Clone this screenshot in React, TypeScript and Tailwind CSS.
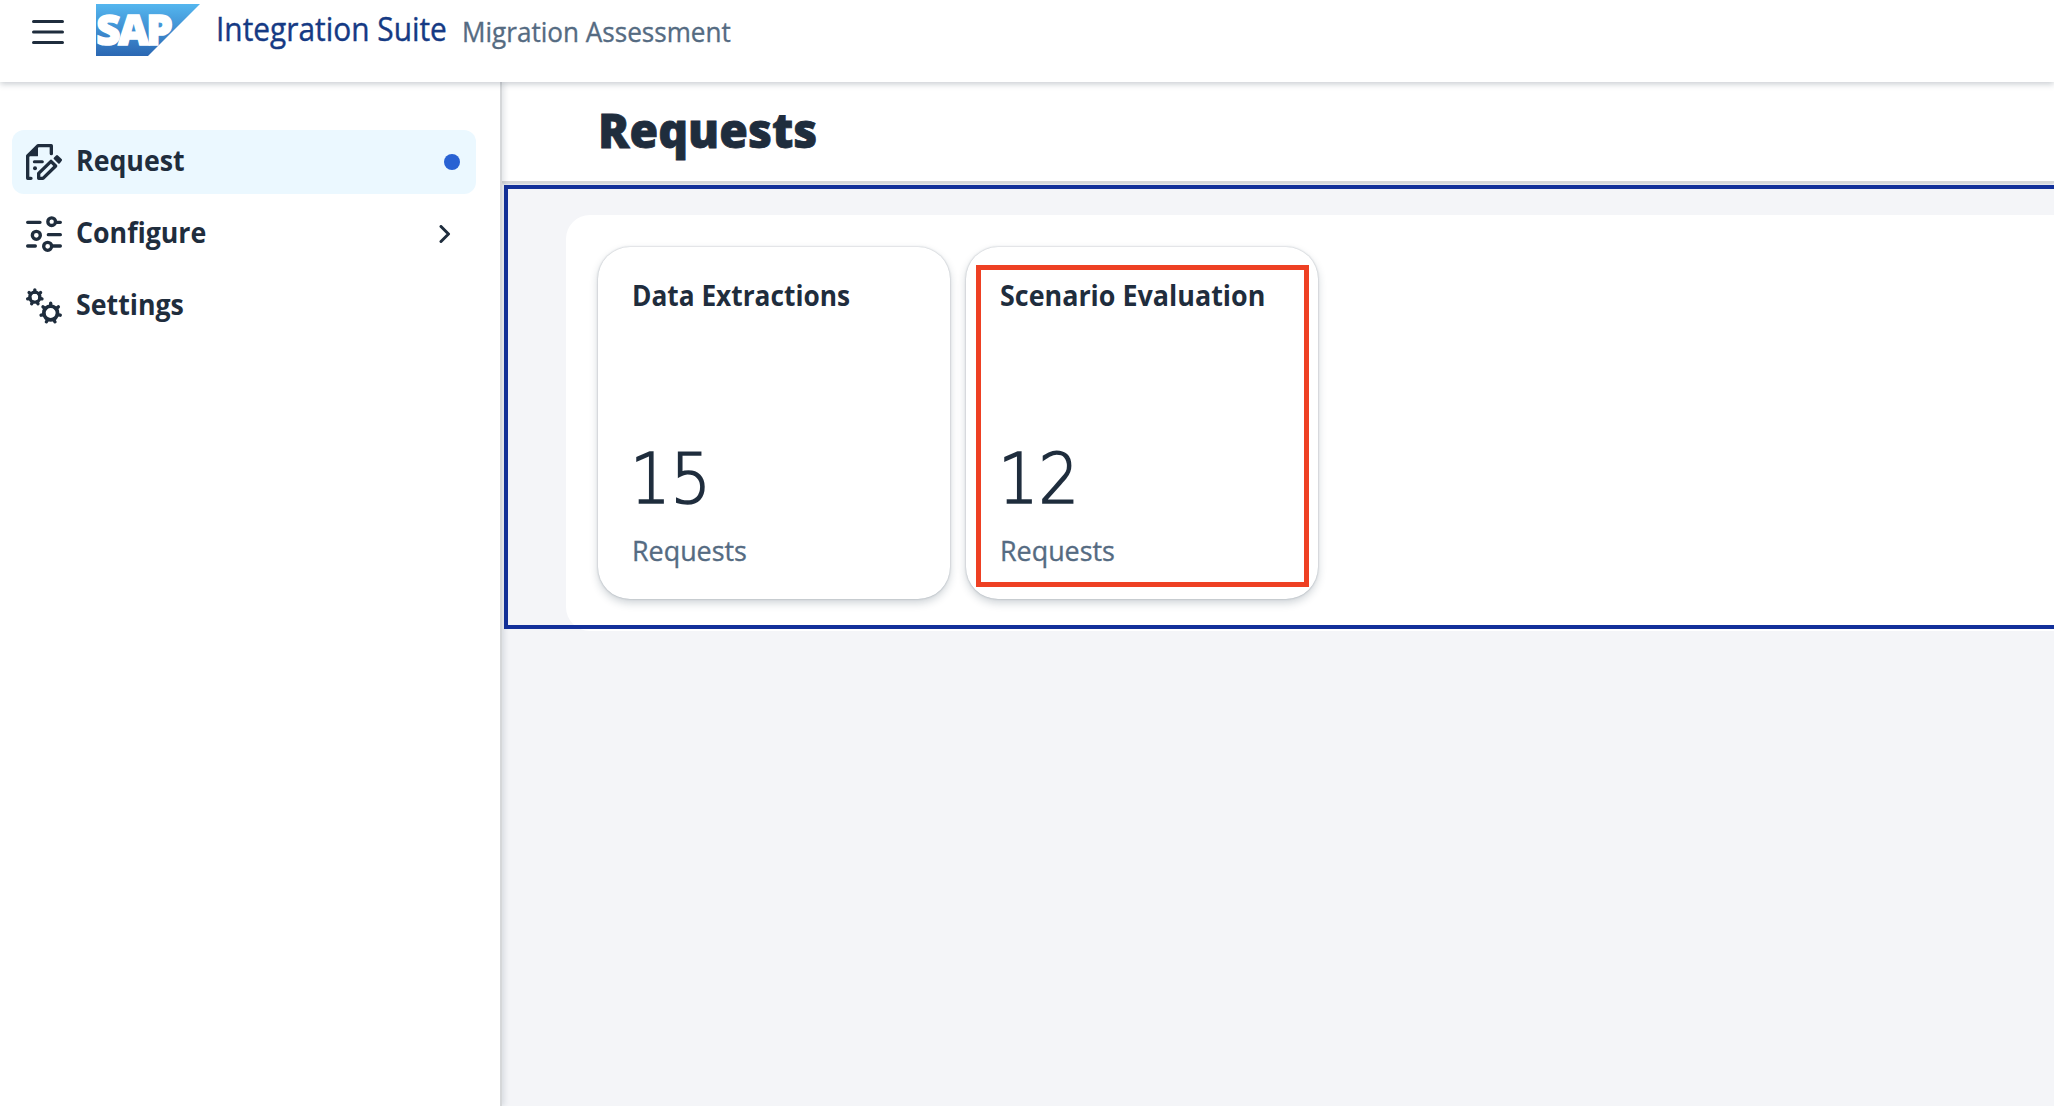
import type { ReactNode } from "react";

const INK = "#1f2d3d";

function MenuIcon() {
  return (
    <svg width="32" height="24" viewBox="0 0 32 24" stroke={INK} strokeWidth="3" strokeLinecap="round">
      <path d="M1.5 1.5H30.5M1.5 12H30.5M1.5 22.5H30.5" />
    </svg>
  );
}

function SapLogo() {
  return (
    <svg width="104" height="52" viewBox="0 0 104 52" className="block overflow-visible">
      <defs>
        <linearGradient id="sap" x1="0" y1="0" x2="0" y2="1">
          <stop offset="0" stopColor="#54b6ef" />
          <stop offset="1" stopColor="#2b67b3" />
        </linearGradient>
      </defs>
      <path d="M0 0H104L52 52H0Z" fill="url(#sap)" />
      <text
        x="0.3"
        y="41.2"
        fill="#fff"
        stroke="#fff"
        strokeWidth="1.6"
        fontFamily="Open Sans, sans-serif"
        fontWeight="800"
        fontSize="42"
        letterSpacing="-2.4"
      >
        SAP
      </text>
    </svg>
  );
}

function RequestIcon() {
  return (
    <svg width="36" height="36" viewBox="78 72 108 108" fill="none" stroke={INK} strokeWidth="10" strokeLinecap="round" strokeLinejoin="round">
      <path d="M93 175H83V108L114 77H154V101" />
      <path d="M86 107L112 81V107Z" fill={INK} strokeWidth="4" />
      <path d="M103 125H127" strokeWidth="9" />
      <circle cx="105" cy="145" r="6" fill={INK} stroke="none" />
      <path d="M116 175V160L153 124L167 138L129 175Z" strokeWidth="10" />
      <path d="M171 109L182 120L177 127L165 115Z" fill={INK} strokeWidth="8" />
    </svg>
  );
}

function ConfigureIcon() {
  return (
    <svg width="36" height="36" viewBox="78 288 108 108" fill="none" stroke={INK} strokeWidth="10" strokeLinecap="round">
      <path d="M83 307H120M170 307H181M145 344H181M83 378H106M160 378H181" />
      <circle cx="155" cy="305" r="11.5" />
      <circle cx="109" cy="346" r="12" />
      <circle cx="143" cy="379" r="12" />
    </svg>
  );
}

function Gear({ cx, cy, r, tip, ring }: { cx: number; cy: number; r: number; tip: number; ring: number }) {
  return (
    <g>
      <circle cx={cx} cy={cy} r={r} strokeWidth={ring} />
      {[0, 1, 2, 3, 4, 5, 6].map((i) => {
        const a = (i * 2 * Math.PI) / 7 - Math.PI / 2;
        return (
          <line
            key={i}
            x1={cx + r * Math.cos(a)}
            y1={cy + r * Math.sin(a)}
            x2={cx + tip * Math.cos(a)}
            y2={cy + tip * Math.sin(a)}
            strokeWidth="10"
          />
        );
      })}
    </g>
  );
}

function SettingsIcon() {
  return (
    <svg width="36" height="36" viewBox="78 504 108 108" fill="none" stroke={INK} strokeLinecap="round">
      <Gear cx={104.5} cy={531.5} r={15} tip={22} ring={10} />
      <Gear cx={152} cy={579} r={20.5} tip={29.5} ring={11} />
    </svg>
  );
}

function ChevronIcon() {
  return (
    <svg width="12" height="18" viewBox="0 0 12 18" fill="none" stroke={INK} strokeWidth="3" strokeLinecap="round" strokeLinejoin="round" className="mr-[9px]">
      <path d="M2 1.5L9.5 9L2 16.5" />
    </svg>
  );
}

function NavItem({ icon, label, active, children }: { icon: ReactNode; label: string; active?: boolean; children?: ReactNode }) {
  return (
    <a className={`flex h-16 items-center rounded-xl pl-[14px] pr-4 ${active ? "bg-[#ebf8ff]" : ""}`}>
      {icon}
      <span className="mb-[4px] ml-[14px] origin-left scale-x-[0.955] whitespace-nowrap text-[28px] font-bold leading-[38px]">{label}</span>
      <span className="ml-auto flex">{children}</span>
    </a>
  );
}

function Tile({ title, titleScale, value, marked }: { title: string; titleScale: string; value: string; marked?: boolean }) {
  return (
    <article className="relative flex h-[352px] w-[352px] flex-col rounded-[32px] bg-white pl-[34px] pt-[29px] shadow-[0_0_2px_rgba(34,53,72,0.35),0_4px_8px_rgba(34,53,72,0.22)]">
      <h2 className={`origin-left whitespace-nowrap text-[28px] font-bold leading-[38px] ${titleScale}`}>{title}</h2>
      <div className="-ml-[2px] mt-[124px] h-[82px] origin-left scale-x-[0.91] whitespace-nowrap font-['DejaVu_Sans',sans-serif] text-[70px] font-extralight leading-[82px] [-webkit-text-stroke:1.7px_#1f2d3d]">{value}</div>
      <p className="mt-[11px] origin-left scale-x-[0.96] text-[28px] leading-[38px] text-[#556b82] [-webkit-text-stroke:0.35px_#556b82]">Requests</p>
      {marked && <div className="absolute left-[10px] top-[18px] h-[322px] w-[333px] border-[5px] border-[#ee4023]" />}
    </article>
  );
}

export default function App() {
  return (
    <div className="flex h-[1106px] w-full flex-col overflow-hidden bg-white font-['Open_Sans',sans-serif] text-[#1f2d3d]">
      <header className="relative z-10 flex h-[82px] shrink-0 items-start bg-white shadow-[0_2px_6px_rgba(34,53,72,0.25)]">
        <div className="ml-8 mt-5"><MenuIcon /></div>
        <div className="ml-8 mt-1"><SapLogo /></div>
        <span className="ml-4 mt-[7px] w-[246px] origin-left scale-x-[0.933] whitespace-nowrap text-[32px] leading-[44px] text-[#153a84] [-webkit-text-stroke:0.4px_#153a84]">Integration Suite</span>
        <span className="mt-[12px] origin-left scale-x-[0.932] whitespace-nowrap text-[28px] leading-[38px] text-[#556b82] [-webkit-text-stroke:0.35px_#556b82]">Migration Assessment</span>
      </header>
      <div className="flex min-h-0 flex-1">
        <nav className="relative z-[5] flex w-[502px] shrink-0 flex-col gap-2 border-r-2 border-[#d5d7d9] bg-white pl-3 pr-6 pt-12 shadow-[2px_0_6px_rgba(34,53,72,0.15)]">
          <NavItem icon={<RequestIcon />} label="Request" active>
            <span className="h-4 w-4 rounded-full bg-[#2962d3]" />
          </NavItem>
          <NavItem icon={<ConfigureIcon />} label="Configure">
            <ChevronIcon />
          </NavItem>
          <NavItem icon={<SettingsIcon />} label="Settings" />
        </nav>
        <main className="flex min-w-0 flex-1 flex-col bg-[#f4f5f8]">
          <div className="flex h-[101px] shrink-0 items-start border-b-2 border-[#d5d7d9] bg-white pl-[96px] pt-[15px] shadow-[0_1px_2px_rgba(34,53,72,0.2)]">
            <h1 className="origin-left scale-x-[0.968] whitespace-nowrap text-[48px] font-extrabold leading-[66px] [-webkit-text-stroke:0.8px_#1f2d3d]">Requests</h1>
          </div>
          <section className="relative ml-[2px] mt-[2px] h-[446px] shrink-0 pl-[62px] pt-[30px]">
            <div className="flex h-[416px] gap-4 rounded-l-3xl bg-white pl-8 pt-8">
              <Tile title="Data Extractions" titleScale="scale-x-[0.938]" value="15" />
              <Tile title="Scenario Evaluation" titleScale="scale-x-[0.96]" value="12" marked />
            </div>
            <div className="absolute inset-x-0 top-0 h-[444px] border-4 border-r-0 border-[#12309a]" />
          </section>
        </main>
      </div>
    </div>
  );
}
